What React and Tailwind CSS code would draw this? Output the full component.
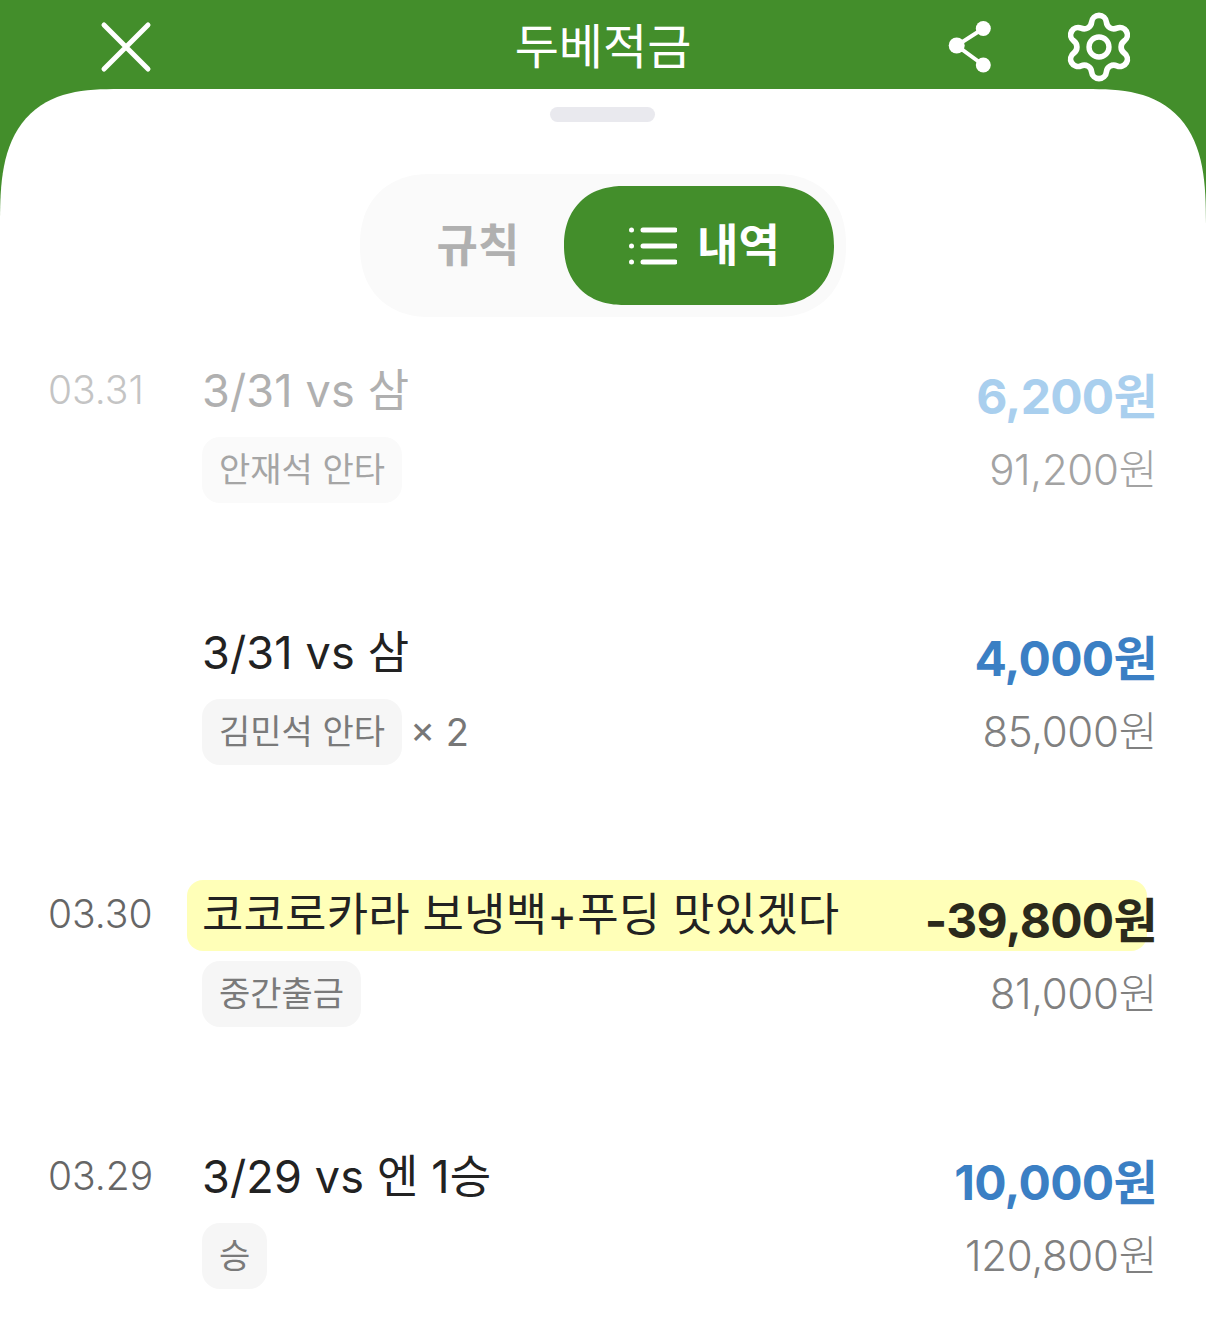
const rows = [
  { date: '03.31', title: '3/31 vs 삼', tag: '안재석 안타', amount: '6,200원', total: '91,200원', dim: true },
  { date: '', title: '3/31 vs 삼', tag: '김민석 안타', times: '× 2', amount: '4,000원', total: '85,000원' },
  { date: '03.30', title: '코코로카라 보냉백+푸딩 맛있겠다', tag: '중간출금', amount: '-39,800원', total: '81,000원', memo: true },
  { date: '03.29', title: '3/29 vs 엔 1승', tag: '승', amount: '10,000원', total: '120,800원' },
];

function Row({ row }) {
  return (
    <div className="relative flex mb-[121px]">
      {/* highlighter behind the memo line */}
      {row.memo && (
        <div className="absolute left-[138px] right-[10px] top-[-6px] h-[71px] rounded-[16px] bg-[#ffffb8]" />
      )}
      <div className={`relative w-[153px] shrink-0 -ml-px text-[39px] leading-[56px] font-light ${row.dim ? 'text-[#c4c4c4]' : 'text-[#666666]'}`}>{row.date}</div>
      <div className="relative flex-1 min-w-0 ml-px">
        <div className="flex justify-between items-start h-[68px]">
          <div className={`text-[45px] leading-[58px] tracking-[0.15px] ${row.dim ? 'text-[#b0b0b0]' : 'text-[#222222]'}`}>{row.title}</div>
          <div className={`text-[48px] leading-[70px] font-bold tracking-[-0.7px] ${row.memo ? 'text-[#2b2a1c]' : row.dim ? 'text-[#a9cfee]' : 'text-[#3b7fc4]'}`}>{row.amount}</div>
        </div>
        <div className="flex justify-between items-center mt-[7px] h-[66px]">
          <div className="flex items-center gap-[8px]">
            <div className={`h-[66px] px-[17px] pb-[2px] rounded-[18px] flex items-center text-[34px] ${row.dim ? 'bg-[#fafafa] text-[#a5a5a5]' : 'bg-[#f6f6f6] text-[#7a7a7a]'}`}>{row.tag}</div>
            {row.times && <div className="text-[38px] text-[#777777]">{row.times}</div>}
          </div>
          <div className={`text-[42px] font-light tracking-[-0.3px] pb-[2px] ${row.dim ? 'text-[#a3a3a3]' : 'text-[#808080]'}`}>{row.total}</div>
        </div>
      </div>
    </div>
  );
}

export default function App() {
  return (
    <div className="h-[1332px] overflow-hidden bg-white font-['Inter','Noto_Sans_CJK_KR',sans-serif]">
      <div className="bg-[#438e2b]">
        <div className="h-[89px] pt-[4px] grid grid-cols-[1fr_auto_1fr] items-center">
          <div className="pl-[100px] flex">
            <svg width="52" height="52" viewBox="0 0 52 52" fill="none" stroke="white" strokeWidth="5" strokeLinecap="round">
              <path d="M4 4 L48 48 M48 4 L4 48" />
            </svg>
          </div>
          <div className="text-[48px] leading-[60px] text-white">두베적금</div>
          <div className="flex justify-end items-center pr-[69px] gap-[69px]">
            <svg width="44" height="52" viewBox="0 0 44 52" fill="white" stroke="white" strokeWidth="4">
              <path d="M35.3 7.5 L8.7 24.5 L35.3 44" fill="none" />
              <circle cx="35.3" cy="7.5" r="7.5" stroke="none" />
              <circle cx="35.3" cy="44" r="7.5" stroke="none" />
              <circle cx="8.7" cy="24.5" r="8" stroke="none" />
            </svg>
            <svg width="76" height="76" viewBox="0 0 24 24" fill="none" stroke="white" strokeWidth="1.8" strokeLinecap="round" strokeLinejoin="round">
              <path d="M9.671 4.136a2.34 2.34 0 0 1 4.659 0 2.34 2.34 0 0 0 3.319 1.915 2.34 2.34 0 0 1 2.33 4.033 2.34 2.34 0 0 0 0 3.831 2.34 2.34 0 0 1-2.33 4.033 2.34 2.34 0 0 0-3.319 1.915 2.34 2.34 0 0 1-4.659 0 2.34 2.34 0 0 0-3.32-1.915 2.34 2.34 0 0 1-2.33-4.033 2.34 2.34 0 0 0 0-3.831A2.34 2.34 0 0 1 6.35 6.051a2.34 2.34 0 0 0 3.32-1.915" />
              <circle cx="12" cy="12" r="3.15" strokeWidth="1.7" />
            </svg>
          </div>
        </div>

        <div className="bg-white rounded-tl-[120px_135px] rounded-tr-[120px_135px] [corner-shape:superellipse(1.5)] pt-[18px] pb-[45px] px-[49px]">
          <div className="w-[105px] h-[15px] rounded-full bg-[#e9e9ee] mx-auto -translate-x-px" />

          <div className="mt-[52px] mb-[45px] mx-auto w-[486px] h-[143px] p-[12px] rounded-[70px] [corner-shape:superellipse(1.15)] bg-[#fafafa] flex items-center">
            <div className="flex-1 text-center text-[45px] font-bold text-[#b0b0b0] pl-[20px]">규칙</div>
            <div className="w-[270px] h-[119px] rounded-[60px] [corner-shape:superellipse(1.15)] bg-[#438e2b] flex items-center justify-center gap-[20px] pl-[11px] text-white">
              <svg width="48" height="40" viewBox="0 0 48 40" fill="white" stroke="white" strokeWidth="5" strokeLinecap="round">
                <path d="M14 4 H46 M14 20 H46 M14 36 H46" fill="none" />
                <circle cx="2.5" cy="4" r="2.5" stroke="none" />
                <circle cx="2.5" cy="20" r="2.5" stroke="none" />
                <circle cx="2.5" cy="36" r="2.5" stroke="none" />
              </svg>
              <span className="text-[45px] font-bold">내역</span>
            </div>
          </div>

          {rows.map((row, i) => <Row key={i} row={row} />)}
        </div>
      </div>
    </div>
  );
}
